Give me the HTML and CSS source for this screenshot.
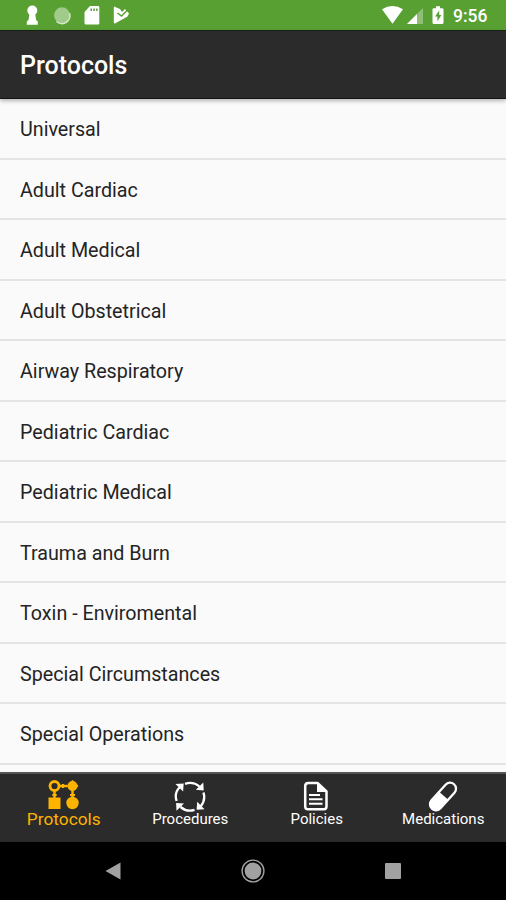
FILE: index.html
```html
<!DOCTYPE html>
<html lang="en">
<head>
<meta charset="utf-8">
<title>Protocols</title>
<link rel="stylesheet" href="styles.css">
</head>
<body>
<div class="screen">
  <div class="status">
    <svg class="notifications" width="110" height="30" viewBox="0 0 110 30" fill="#fff">
      <circle cx="12.300" cy="10.500" r="5"/>
      <path d="M9.500 13h5.600l1 7 1.700 1.500v3.300H6.800v-3.300L8.500 20z"/>
      <circle cx="42" cy="15.300" r="8" fill="#a0cb8b"/>
      <path d="M49.500 13a8 8 0 0 1-13 8.500" fill="none" stroke="#d5e9ca" stroke-width="1.500"/>
      <path fill-rule="evenodd" d="M70 6h8q1.300 0 1.300 1.300v15.900q0 1.300-1.300 1.300H66q-1.500 0-1.500-1.500V12zM70.500 8.500v2.500h1.500v-2.500zm2.800 0v2.500h1.500v-2.500zm2.800 0v2.500h1.500v-2.500z"/>
      <path d="M94 6.500l6 2.500 2 3 3-3 4 4.500-1.500 3-12.500 7q-1.200.3-1.200-1V8z"/>
      <path d="M97.500 13l4 3 6-6" fill="none" stroke="#59a033" stroke-width="1.500"/>
    </svg>
    <div class="system">
      <svg width="65" height="30" viewBox="0 0 65 30" fill="#fff">
        <path d="M1 9.300Q11.500 2.500 22 9.300L11.500 23.700z"/>
        <path d="M42 8v16H26z" fill="#8fbe75"/>
        <path d="M36 14v10H26z"/>
        <path d="M55 6.300h4v1.900h2.200q1.300 0 1.300 1.300v13.300q0 1.300-1.300 1.300h-8.400q-1.300 0-1.300-1.300V9.500q0-1.300 1.300-1.300H55z"/>
        <path d="M58.200 10.500l-4.200 6h2.400v4.700l4-6.200h-2.200z" fill="#59a033"/>
      </svg>
      <span class="clock">9:56</span>
    </div>
  </div>
  <header class="header"><h1>Protocols</h1></header>
  <ul class="list">
    <li>Universal</li>
    <li>Adult Cardiac</li>
    <li>Adult Medical</li>
    <li>Adult Obstetrical</li>
    <li>Airway Respiratory</li>
    <li>Pediatric Cardiac</li>
    <li>Pediatric Medical</li>
    <li>Trauma and Burn</li>
    <li>Toxin - Enviromental</li>
    <li>Special Circumstances</li>
    <li>Special Operations</li>
  </ul>
  <nav class="tabs">
    <a class="tab active">
      <svg width="34" height="34" viewBox="1 0 34 34" fill="#fdb300">
        <circle cx="8.500" cy="7" r="4.500" fill="none" stroke="#fdb300" stroke-width="2.800"/>
        <path d="M13 5.800h8v2.400h-8zM15.800 5h2.200v4h-2.200zM7.300 12h2.400v8H7.300zM6.300 15h4.400v2H6.300zM25.300 12h2.400v8h-2.400zM24 15h5v2h-5zM2.500 18.500h12v11.500h-12z"/>
        <path d="M26.500 1l6 6-6 6-6-6z"/>
        <circle cx="26.500" cy="7" r="4.900"/>
        <circle cx="26.500" cy="24" r="6.200"/>
      </svg>
      <span>Protocols</span>
    </a>
    <a class="tab">
      <svg width="34" height="34" viewBox="0 -1 34 34" fill="none" stroke="#fff" stroke-width="2.300">
        <path d="M3.600 21Q1 13 6.500 7.500M12 3.800Q20 .9 26.500 6.500M30.400 12.500Q33 20 27.500 26.500M21.500 29.800Q14 32.500 7.500 27"/>
        <path d="M2.500 4l8.200-.4-.6 7.900zM30.300 2.500l.4 7.900-7.900-.6zM31.500 29.300l-7.900.4.600-7.900zM3.500 30.800l-.4-7.900 7.900.6z" fill="#fff" stroke="none"/>
      </svg>
      <span>Procedures</span>
    </a>
    <a class="tab">
      <svg width="34" height="34" viewBox="1 -1 34 34" fill="none" stroke="#fff" stroke-width="2.500">
        <path d="M9.500 2.900h9L27.500 11.500v15q0 2.800-2.800 2.800H9q-2.800 0-2.800-2.800V6q0-3.100 3.300-3.100z" stroke-linejoin="round"/>
        <path d="M18 2.500v9.500h9.500L18.500 2.500z" fill="#fff" stroke="none"/>
        <path d="M10 15h11M10 19.300h13.500M10 23.700h13.500" stroke-width="2"/>
      </svg>
      <span>Policies</span>
    </a>
    <a class="tab">
      <svg width="34" height="34" viewBox="0 -1 34 34">
        <g transform="rotate(42 17 16.500)">
          <rect x="11" y="0" width="12" height="33" rx="6" fill="none" stroke="#fff" stroke-width="2.300"/>
          <path d="M10.500 15.500h13v11.500a6.500 6.500 0 0 1-13 0z" fill="#fff"/>
        </g>
      </svg>
      <span>Medications</span>
    </a>
  </nav>
  <div class="keys">
    <svg width="18" height="18" viewBox="0 0 18 18"><path d="M1.500 9l15-8.500v17z" fill="#a1a1a1"/></svg>
    <svg width="24" height="24" viewBox="0 0 24 24"><circle cx="12" cy="12" r="10.900" fill="none" stroke="#a1a1a1" stroke-width="1.400"/><circle cx="12" cy="12" r="8.400" fill="#a1a1a1"/></svg>
    <svg width="18" height="18" viewBox="0 0 18 18"><rect x="1" y="1" width="16" height="16" rx="1" fill="#a1a1a1"/></svg>
  </div>
</div>
</body>
</html>
```
FILE: styles.css
```css
* { box-sizing: border-box; }
body { margin: 0; font-family: Roboto, sans-serif; }
.screen { width: 506px; height: 900px; display: flex; flex-direction: column; overflow: hidden; background: #fafafa; }
.status { height: 30px; flex: none; display: flex; justify-content: space-between; background: #59a033; color: #fff; }
.notifications { margin-left: 20px; }
.system { display: flex; width: 125px; }
.clock { width: 50px; margin-left: 7px; font-size: 17.500px; font-weight: 500; line-height: 32px; }
.header { position: relative; height: 69px; flex: none; padding-left: 20px; background: #2b2b2b; border-top: 1px solid #182015; border-bottom: 1px solid #151515; box-shadow: 0 2px 4px rgba(0, 0, 0, .28); }
.header h1 { margin: 0; color: #fff; font-size: 25px; font-weight: 500; line-height: 70px; }
.list { flex: 1; min-height: 0; margin: 0; padding: 0; list-style: none; overflow: hidden; }
.list li { height: 60.500px; padding-left: 20px; border-bottom: 2px solid #e4e4e4; color: #242424; font-size: 19.700px; line-height: 62px; }
.tabs { height: 70px; flex: none; display: flex; background: #2b2b2b; border-top: 2px solid #555; }
.tab { flex: 1; display: flex; flex-direction: column; align-items: center; padding: 5px 0 0 1px; color: #fff; font-size: 15px; line-height: 18px; }
.tab span { margin-top: -3px; }
.tab.active { color: #fdb300; font-size: 17.300px; }
.keys { height: 58px; flex: none; display: flex; align-items: center; justify-content: space-between; padding: 0 104px; background: #000; }
```
